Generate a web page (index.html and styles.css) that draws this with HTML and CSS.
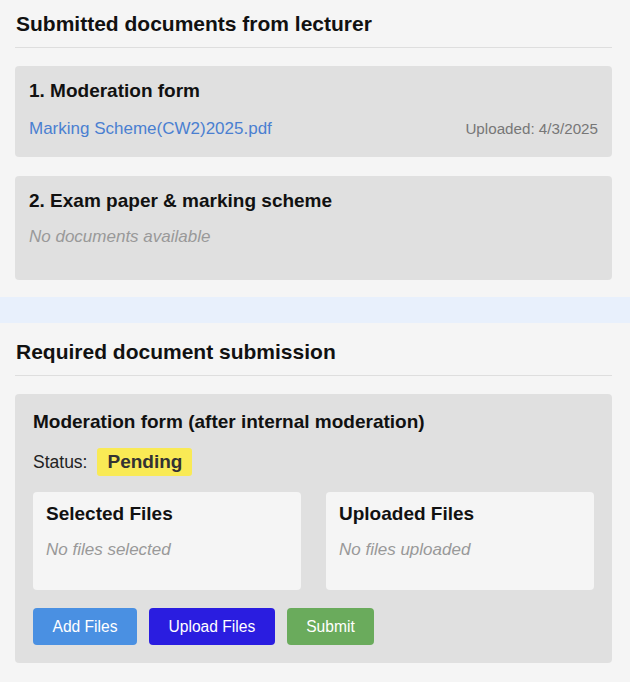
FILE: index.html
```html
<!DOCTYPE html>
<html lang="en">
<head>
<meta charset="utf-8">
<title>Documents</title>
<link rel="stylesheet" href="styles.css">
</head>
<body>
<section class="section section-first">
  <h2 class="section-title">Submitted documents from lecturer</h2>
  <div class="card">
    <h3 class="card-title">1. Moderation form</h3>
    <div class="doc-row">
      <a class="doc-link" href="#">Marking Scheme(CW2)2025.pdf</a>
      <span class="doc-date">Uploaded: 4/3/2025</span>
    </div>
  </div>
  <div class="card">
    <h3 class="card-title">2. Exam paper &amp; marking scheme</h3>
    <p class="empty empty-docs">No documents available</p>
  </div>
</section>
<div class="spacer"></div>
<section class="section section-second">
  <h2 class="section-title">Required document submission</h2>
  <div class="card card-submit">
    <h3 class="card-title">Moderation form (after internal moderation)</h3>
    <div class="status-row">
      <span class="status-label">Status:</span>
      <span class="badge">Pending</span>
    </div>
    <div class="file-grid">
      <div class="file-box">
        <h4 class="file-title">Selected Files</h4>
        <p class="empty empty-files">No files selected</p>
      </div>
      <div class="file-box">
        <h4 class="file-title">Uploaded Files</h4>
        <p class="empty empty-files">No files uploaded</p>
      </div>
    </div>
    <div class="actions">
      <button class="btn btn-add">Add Files</button>
      <button class="btn btn-upload">Upload Files</button>
      <button class="btn btn-submit">Submit</button>
    </div>
  </div>
</section>
</body>
</html>
```
FILE: styles.css
```css
* { box-sizing: border-box; }
html, body { margin: 0; padding: 0; }
body {
  background: #e8f0fc;
  font-family: "Liberation Sans", Arial, sans-serif;
  color: #111;
}
.section {
  background: #f5f5f5;
  padding: 0 18px 17px 15px;
}
.section-first { padding-top: 12px; }
.section-second { padding-top: 17px; min-height: 362px; }
.spacer { height: 26px; }
.section-title {
  margin: 0 0 18px;
  font-size: 21px;
  line-height: 24px;
  font-weight: bold;
  padding: 0 0 11px 1px;
  border-bottom: 1px solid #dedede;
}
.card {
  background: #e0e0e0;
  border-radius: 4px;
  padding: 14px 14px 18px 14px;
  margin-bottom: 19px;
}
.card:last-child { margin-bottom: 0; }
.card-title {
  margin: 0;
  font-size: 19px;
  line-height: 22px;
  font-weight: bold;
}
.doc-row {
  display: flex;
  justify-content: space-between;
  align-items: baseline;
  margin-top: 17px;
}
.doc-link {
  font-size: 17px;
  line-height: 20px;
  color: #4a7fd1;
  text-decoration: none;
}
.doc-date {
  font-size: 15.2px;
  color: #777;
}
.empty {
  margin: 0;
  font-style: italic;
  font-size: 17px;
  line-height: 20px;
  color: #999;
}
.empty-docs { margin: 15px 0 15px; }
.card-submit { padding: 17px 18px 18px 18px; }
.status-row {
  display: flex;
  align-items: center;
  gap: 10px;
  margin-top: 15px;
}
.status-label {
  font-size: 17.5px;
  line-height: 20px;
  color: #222;
}
.badge {
  background: #f9ea55;
  color: #333;
  font-weight: bold;
  font-size: 19px;
  line-height: 22px;
  padding: 3px 10px;
  border-radius: 3px;
}
.file-grid {
  display: grid;
  grid-template-columns: 1fr 1fr;
  gap: 25px;
  margin-top: 16px;
}
.file-box {
  background: #f5f5f5;
  border-radius: 4px;
  padding: 11px 13px 30px;
}
.file-title {
  margin: 0;
  font-size: 19px;
  line-height: 22px;
  font-weight: bold;
}
.empty-files { margin-top: 15px; }
.actions {
  display: flex;
  gap: 12px;
  margin-top: 18px;
}
.btn {
  font-family: "Liberation Sans", Arial, sans-serif;
  font-size: 15.6px;
  height: 37px;
  padding: 0 19.5px;
  border: none;
  border-radius: 4px;
  color: #fff;
  cursor: pointer;
}
.btn-add { background: #4a90e2; }
.btn-upload { background: #2a1de0; }
.btn-submit { background: #6aab5c; }
```
